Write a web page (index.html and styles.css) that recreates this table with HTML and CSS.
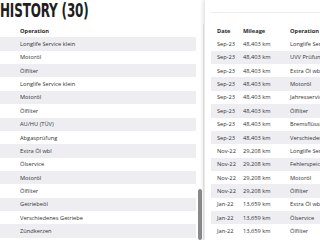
FILE: index.html
```html
<!DOCTYPE html>
<html>
<head>
<meta charset="utf-8">
<link rel="stylesheet" href="styles.css">
</head>
<body>
<div class="page">
  <section class="left">
    <h1 class="title"><span>HISTORY (30)</span></h1>
    <div class="list-wrap">
      <div class="list">
        <div class="row head"><span class="c-op">Operation</span></div>
        <div class="row"><span class="c-op">Longlife Service klein</span></div>
        <div class="row"><span class="c-op">Motoröl</span></div>
        <div class="row"><span class="c-op">Ölfilter</span></div>
        <div class="row"><span class="c-op">Longlife Service klein</span></div>
        <div class="row"><span class="c-op">Motoröl</span></div>
        <div class="row"><span class="c-op">Ölfilter</span></div>
        <div class="row"><span class="c-op">AU/HU (TÜV)</span></div>
        <div class="row"><span class="c-op">Abgasprüfung</span></div>
        <div class="row"><span class="c-op">Extra Öl wbl</span></div>
        <div class="row"><span class="c-op">Ölservice</span></div>
        <div class="row"><span class="c-op">Motoröl</span></div>
        <div class="row"><span class="c-op">Ölfilter</span></div>
        <div class="row"><span class="c-op">Getriebeöl</span></div>
        <div class="row"><span class="c-op">Verschiedenes Getriebe</span></div>
        <div class="row"><span class="c-op">Zündkerzen</span></div>
      </div>
      <div class="track"><div class="thumb"></div></div>
    </div>
  </section>
  <section class="right">
    <div class="topbar"></div>
    <div class="rtable">
      <div class="rrow head"><span class="c-date">Date</span><span class="c-mil">Mileage</span><span class="c-rop">Operation</span></div>
      <div class="rrow"><span class="c-date">Sep-23</span><span class="c-mil">48,403 km</span><span class="c-rop">Longlife Service klein</span></div>
      <div class="rrow"><span class="c-date">Sep-23</span><span class="c-mil">48,403 km</span><span class="c-rop">UVV Prüfung</span></div>
      <div class="rrow"><span class="c-date">Sep-23</span><span class="c-mil">48,403 km</span><span class="c-rop">Extra Öl wbl</span></div>
      <div class="rrow"><span class="c-date">Sep-23</span><span class="c-mil">48,403 km</span><span class="c-rop">Motoröl</span></div>
      <div class="rrow"><span class="c-date">Sep-23</span><span class="c-mil">48,403 km</span><span class="c-rop">Jahresservice</span></div>
      <div class="rrow"><span class="c-date">Sep-23</span><span class="c-mil">48,403 km</span><span class="c-rop">Ölfilter</span></div>
      <div class="rrow"><span class="c-date">Sep-23</span><span class="c-mil">48,403 km</span><span class="c-rop">Bremsflüssigkeit</span></div>
      <div class="rrow"><span class="c-date">Sep-23</span><span class="c-mil">48,403 km</span><span class="c-rop">Verschiedenes</span></div>
      <div class="rrow"><span class="c-date">Nov-22</span><span class="c-mil">29,208 km</span><span class="c-rop">Longlife Service klein</span></div>
      <div class="rrow"><span class="c-date">Nov-22</span><span class="c-mil">29,208 km</span><span class="c-rop">Fehlerspeicher</span></div>
      <div class="rrow"><span class="c-date">Nov-22</span><span class="c-mil">29,208 km</span><span class="c-rop">Motoröl</span></div>
      <div class="rrow"><span class="c-date">Nov-22</span><span class="c-mil">29,208 km</span><span class="c-rop">Ölfilter</span></div>
      <div class="rrow"><span class="c-date">Jan-22</span><span class="c-mil">13,659 km</span><span class="c-rop">Extra Öl wbl</span></div>
      <div class="rrow"><span class="c-date">Jan-22</span><span class="c-mil">13,659 km</span><span class="c-rop">Ölservice</span></div>
      <div class="rrow"><span class="c-date">Jan-22</span><span class="c-mil">13,659 km</span><span class="c-rop">Ölfilter</span></div>
    </div>
  </section>
</div>
</body>
</html>
```

FILE: styles.css
```css
* { box-sizing: border-box; }
html, body { margin: 0; padding: 0; }
body {
  width: 320px;
  height: 240px;
  overflow: hidden;
  background: #ffffff;
  font-family: "Open Sans", "Noto Sans", sans-serif;
  font-size: 5.7px;
  color: #333333;
}
.page {
  display: flex;
  height: 240px;
}
.left {
  width: 204px;
  flex: none;
  display: flex;
  flex-direction: column;
}
.title {
  margin: 0;
  height: 24px;
  padding-top: 1px;
  font-family: "Liberation Sans Narrow", "DejaVu Sans Condensed", sans-serif;
  font-weight: bold;
  font-size: 19px;
  line-height: 19px;
  color: #1e1e1e;
  white-space: nowrap;
}
.title span {
  display: inline-block;
  transform: scaleX(0.7);
  transform-origin: left center;
  letter-spacing: -0.2px;
}
.list-wrap {
  display: flex;
  flex: 1;
}
.list {
  width: 196px;
}
.row {
  height: 13.36px;
  display: flex;
  align-items: center;
  padding-left: 20px;
  white-space: nowrap;
}
.row.head {
  font-weight: 700;
  color: #2a2a2a;
}
.list .row:nth-child(even) {
  background: #eeeef2;
}
.track {
  width: 8px;
  padding-top: 165px;
  padding-left: 2px;
  border-right: 1px solid #ececec;
}
.thumb {
  width: 4px;
  height: 51px;
  border-radius: 2px;
  background: #8a8a8a;
}
.right {
  flex: 1;
  background: #ffffff;
  box-shadow: -2px 0 4px rgba(0, 0, 0, 0.12);
  overflow: hidden;
  margin-left: 1px;
}
.topbar {
  height: 13px;
  margin-left: 6px;
  border-bottom: 1px solid #eeeeee;
}
.rtable {
  margin-top: 11px;
  padding-left: 6px;
}
.rrow {
  height: 13.36px;
  display: flex;
  align-items: center;
  padding-left: 6px;
  white-space: nowrap;
}
.rrow.head {
  font-weight: 700;
  color: #2a2a2a;
}
.rtable .rrow:nth-child(odd):not(.head) {
  background: #eeeef2;
}
.c-date { width: 26px; flex: none; }
.c-mil { width: 47px; flex: none; }
.c-rop { flex: none; }
```
